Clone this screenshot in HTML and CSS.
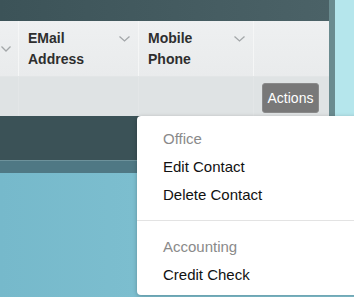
FILE: index.html
```html
<!DOCTYPE html>
<html lang="en">
<head>
    <meta charset="UTF-8">
    <meta name="viewport" content="width=device-width, initial-scale=1.0">
    <title>Contacts</title>
    <link rel="stylesheet" href="styles.css">
</head>
<body>
    <div class="upper">
        <div class="panel">
            <div class="titlebar"></div>
            <div class="grid head">
                <div class="cell first">
                    <svg class="chev" width="10" height="6" viewBox="0 0 10 6"><polyline points="0.5,0.5 5,5 9.5,0.5"/></svg>
                </div>
                <div class="cell">
                    <span class="label">EMail<br>Address</span>
                    <svg class="chev" width="11" height="6" viewBox="0 0 11 6"><polyline points="0.5,0.5 5.5,5 10.5,0.5"/></svg>
                </div>
                <div class="cell">
                    <span class="label">Mobile<br>Phone</span>
                    <svg class="chev" width="11" height="6" viewBox="0 0 11 6"><polyline points="0.5,0.5 5.5,5 10.5,0.5"/></svg>
                </div>
                <div class="cell"></div>
            </div>
            <div class="grid row">
                <div class="cell"></div>
                <div class="cell"></div>
                <div class="cell"></div>
                <div class="cell">
                    <button type="button" class="btn">Actions</button>
                </div>
            </div>
        </div>
        <div class="edge"></div>
        <div class="sky"></div>
    </div>
    <div class="footer"></div>
    <div class="band"></div>

    <div class="menu">
        <div class="menu-title">Office</div>
        <div class="menu-item">Edit Contact</div>
        <div class="menu-item">Delete Contact</div>
        <div class="divider"></div>
        <div class="menu-title">Accounting</div>
        <div class="menu-item">Credit Check</div>
    </div>
</body>
</html>
```

FILE: styles.css
```css
body {
    margin: 0;
    width: 354px;
    height: 297px;
    overflow: hidden;
    position: relative;
    font-family: "Liberation Sans", Arial, sans-serif;
    background: linear-gradient(to right, #76b9cb, #86c6d5);
}
.upper {
    display: flex;
    height: 116px;
}
.panel {
    width: 329px;
    display: flex;
    flex-direction: column;
}
.titlebar {
    height: 21px;
    background: linear-gradient(to right, #3c5358, #4b6267);
}
.edge {
    width: 6px;
    background: #6a8b8f;
}
.sky {
    flex: 1;
    background: #b5e6ec;
}
.grid {
    display: grid;
    grid-template-columns: 18px 120px 115px 76px;
}
.head {
    height: 55px;
    background: linear-gradient(#eef0f1, #e9ebec);
    border-bottom: 1px solid #e2e5e6;
}
.row {
    height: 39px;
    background: #dfe3e4;
}
.cell {
    display: flex;
    justify-content: space-between;
    align-items: flex-start;
    border-left: 1px solid #f5f6f6;
}
.row .cell {
    border-left-color: #e3e6e7;
}
.grid .cell:first-child {
    border-left: none;
}
.head .cell {
    padding: 7px 8px 0 9px;
}
.head .cell.first {
    padding: 0;
    align-items: center;
    justify-content: flex-start;
    padding-left: 1px;
}
.label {
    font-size: 14px;
    font-weight: bold;
    line-height: 21px;
    color: #2e2e2e;
}
.chev {
    margin-top: 8px;
    fill: none;
    stroke: #a3a7a9;
    stroke-width: 1.3;
}
.first .chev {
    margin-top: 0;
}
.btn {
    margin: 6px 0 0 8px;
    width: 57px;
    height: 30px;
    padding: 0;
    border: 1px solid #8a8a8a;
    border-radius: 3px;
    background: #787878;
    color: #fff;
    font-family: "Liberation Sans", Arial, sans-serif;
    font-size: 14px;
}
.footer {
    height: 44px;
    background: #3b5257;
}
.band {
    height: 12px;
    border-top: 1px solid #6d929b;
    background: #4f7884;
}
.menu {
    position: absolute;
    left: 137px;
    top: 116px;
    width: 230px;
    padding: 9px 0 6px;
    background: #fff;
    border-radius: 4px;
    box-shadow: 0 1px 4px rgba(0, 0, 0, 0.25);
    font-size: 15px;
    line-height: 28px;
}
.menu-title {
    padding-left: 26px;
    color: #8a8a8a;
}
.menu-item {
    padding-left: 26px;
    color: #111;
}
.divider {
    margin: 11px 0 12px;
    height: 1px;
    background: #e3e3e3;
}
```
